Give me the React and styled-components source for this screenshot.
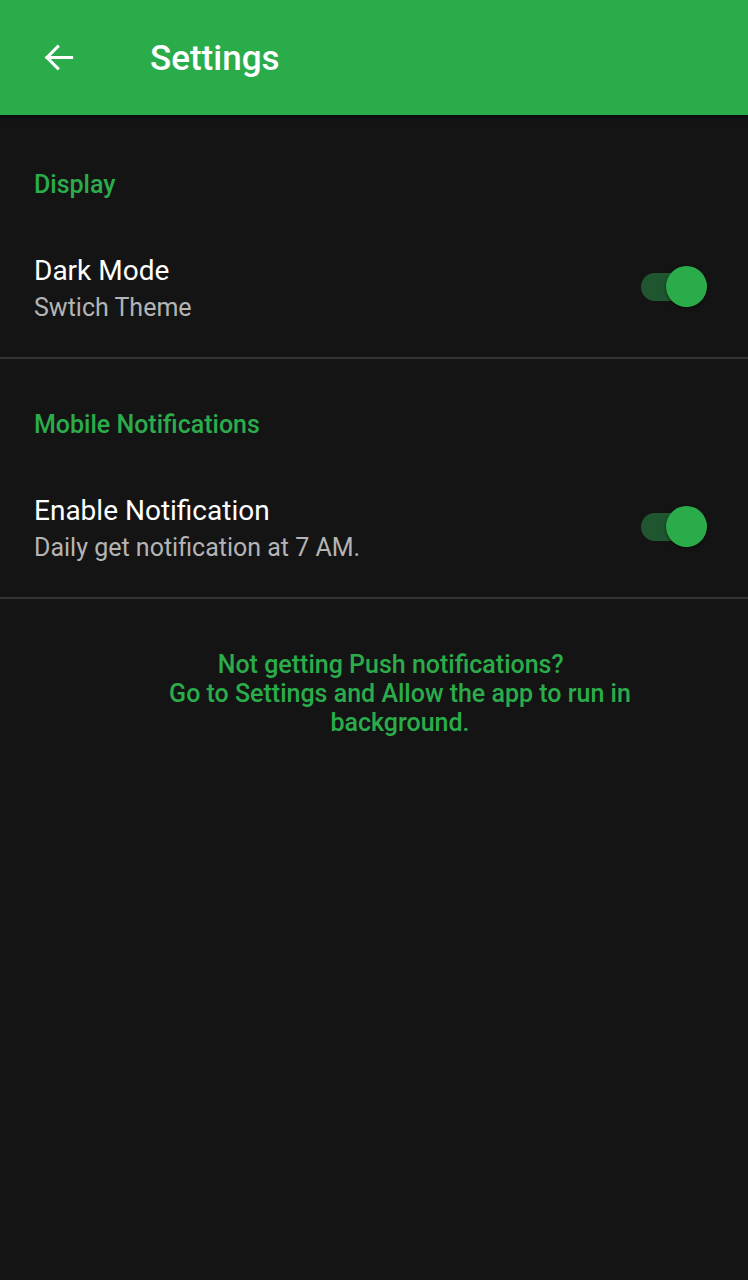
import styled, { createGlobalStyle } from "styled-components";

const GlobalStyle = createGlobalStyle`
  html, body {
    margin: 0;
    padding: 0;
    background: #141414;
  }
  body {
    font-family: Roboto, "Noto Sans", sans-serif;
  }
`;

const Screen = styled.div`
  width: 748px;
  min-height: 1280px;
  background: #141414;
  display: flex;
  flex-direction: column;
`;

const AppBar = styled.header`
  height: 115px;
  background: #2bac4b;
  display: flex;
  align-items: center;
  padding-left: 40px;
  box-shadow: 0 2px 4px rgba(0, 0, 0, 0.5);
  box-sizing: border-box;
`;

const BackButton = styled.button`
  background: none;
  border: none;
  padding: 0;
  width: 37px;
  height: 37px;
  display: flex;
  align-items: center;
  justify-content: center;
  margin-right: 73px;
`;

const Title = styled.h1`
  margin: 0;
  color: #fff;
  font-size: 35px;
  font-weight: 500;
  line-height: 40px;
  padding-top: 2px;
`;

const List = styled.div`
  padding-top: 4px;
`;

const Section = styled.section`
  border-bottom: 2px solid #333;
  padding: 51px 34px 30px;
`;

const SectionTitle = styled.h2`
  margin: 0 0 53px;
  color: #2bac4b;
  font-size: 25px;
  line-height: 30px;
  font-weight: 500;
`;

const Row = styled.div`
  display: flex;
  align-items: center;
  justify-content: space-between;
`;

const RowText = styled.div`
  display: flex;
  flex-direction: column;
`;

const RowTitle = styled.div`
  color: #fff;
  font-size: 28px;
  line-height: 36px;
`;

const RowSub = styled.div`
  color: #b4b4b4;
  font-size: 25px;
  line-height: 38px;
`;

const Toggle = styled.div`
  position: relative;
  width: 66px;
  height: 42px;
  margin: 0 7px 6px 0;
  display: flex;
  align-items: center;
`;

const Track = styled.div`
  width: 58px;
  height: 28px;
  border-radius: 14px;
  background: ${(p) => (p.$on ? "#1f5630" : "#555")};
`;

const Thumb = styled.div`
  position: absolute;
  top: 0;
  left: ${(p) => (p.$on ? "25px" : "0")};
  width: 41px;
  height: 41px;
  border-radius: 50%;
  background: ${(p) => (p.$on ? "#2bac4b" : "#ddd")};
  box-shadow: 0 1px 3px rgba(0, 0, 0, 0.6);
`;

const NoteWrap = styled.div`
  display: flex;
  justify-content: center;
  padding: 51px 0 0 52px;
`;

const Note = styled.p`
  margin: 0;
  max-width: 500px;
  text-align: center;
  color: #2bac4b;
  font-size: 25px;
  font-weight: 500;
  line-height: 29px;
`;

const Switch = ({ on }) => (
  <Toggle>
    <Track $on={on} />
    <Thumb $on={on} />
  </Toggle>
);

const SettingRow = ({ title, sub, on }) => (
  <Row>
    <RowText>
      <RowTitle>{title}</RowTitle>
      <RowSub>{sub}</RowSub>
    </RowText>
    <Switch on={on} />
  </Row>
);

export default function App() {
  return (
    <Screen>
      <GlobalStyle />
      <AppBar>
        <BackButton aria-label="Back">
          <svg width="37" height="37" viewBox="0 0 24 24" fill="none">
            <path
              d="M20.5 12H4.5M11.5 5l-7 7 7 7"
              stroke="#fff"
              strokeWidth="2"
              strokeLinecap="square"
            />
          </svg>
        </BackButton>
        <Title>Settings</Title>
      </AppBar>
      <List>
        <Section>
          <SectionTitle>Display</SectionTitle>
          <SettingRow title="Dark Mode" sub="Swtich Theme" on />
        </Section>
        <Section>
          <SectionTitle>Mobile Notifications</SectionTitle>
          <SettingRow title="Enable Notification" sub="Daily get notification at 7 AM." on />
        </Section>
      </List>
      <NoteWrap>
        <Note>
          Not getting Push notifications?{"\u00a0\u00a0\u00a0"}
          <br />
          Go to Settings and Allow the app to run in background.
        </Note>
      </NoteWrap>
    </Screen>
  );
}
